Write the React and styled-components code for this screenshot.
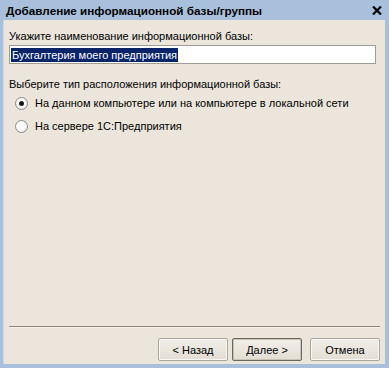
import React, { useState } from 'react';
import styled, { createGlobalStyle } from 'styled-components';

const Global = createGlobalStyle`
  html, body { margin: 0; padding: 0; }
  body { background: #ebe5db; }
`;

const Window = styled.div`
  width: 389px;
  height: 368px;
  box-sizing: border-box;
  display: flex;
  flex-direction: column;
  background: #a9c0dc;
  padding: 0 4px 4px 3px;
  font-family: "Liberation Sans", Arial, sans-serif;
  font-size: 11px;
  color: #000;
`;

const TitleBar = styled.div`
  height: 20px;
  display: flex;
  align-items: center;
  justify-content: space-between;
  padding: 0 3px 0 3px;
`;

const Title = styled.span`
  font-weight: bold;
  font-size: 11.7px;
`;

const CloseIcon = () => (
  <svg width="10" height="9" viewBox="0 0 10 9">
    <path d="M1 0.5 L9 8.5 M9 0.5 L1 8.5" stroke="#000" strokeWidth="2.2" />
  </svg>
);

const Body = styled.div`
  flex: 1;
  display: flex;
  flex-direction: column;
  background: #ebe5db;
  border-left: 1px solid #c8d6e8;
  padding: 9px 5px 0 5px;
`;

const Label = styled.div`
  margin-top: ${(p) => p.$mt || 0}px;
  line-height: 14px;
`;

const Input = styled.div`
  height: 19px;
  box-sizing: border-box;
  margin: 2px 4px 0 0;
  background: #fff;
  border: 1px solid #a09c94;
  padding: 2px 1px;
  display: flex;
  align-items: center;
`;

const Selected = styled.span`
  background: #0a246a;
  color: #fff;
  line-height: 14px;
  padding: 0 1px;
`;

const RadioList = styled.div`
  display: flex;
  flex-direction: column;
  gap: 10px;
  margin-top: 6px;
  padding-left: 6px;
`;

const RadioRow = styled.label`
  display: flex;
  align-items: center;
  gap: 7px;
  line-height: 13px;
  white-space: nowrap;
`;

const Circle = styled.span`
  width: 11px;
  height: 11px;
  border-radius: 50%;
  border: 1px solid #8a8a8a;
  background: radial-gradient(circle at 40% 35%, #ffffff 40%, #e4e2dc 100%);
  display: flex;
  align-items: center;
  justify-content: center;
  &::after {
    content: '';
    width: 5px;
    height: 5px;
    border-radius: 50%;
    background: ${(p) => (p.$checked ? '#1a1a1a' : 'transparent')};
  }
`;

const Spacer = styled.div`
  flex: 1;
`;

const Separator = styled.div`
  height: 0;
  border-top: 1px solid #8e8677;
  border-bottom: 1px solid #f6f3ee;
`;

const Buttons = styled.div`
  display: flex;
  justify-content: flex-end;
  gap: 4px;
  padding: 10px 0 3px 0;
`;

const Button = styled.button`
  width: 70px;
  height: 23px;
  box-sizing: border-box;
  font-family: "Liberation Sans", Arial, sans-serif;
  font-size: 11px;
  color: #000;
  background: linear-gradient(#f2efe9, #e3ddd3);
  border: 1px solid ${(p) => (p.$default ? '#6c675d' : '#aba69c')};
  box-shadow: ${(p) => (p.$default ? 'inset 0 0 0 1px #c9c3b8' : 'inset 0 0 0 1px #faf8f4')};
  border-radius: 2px;
  margin-left: ${(p) => p.$ml || 0}px;
  padding: 0;
`;

export default function App() {
  const [choice, setChoice] = useState(0);
  const options = [
    'На данном компьютере или на компьютере в локальной сети',
    'На сервере 1С:Предприятия',
  ];
  return (
    <>
      <Global />
      <Window>
        <TitleBar>
          <Title>Добавление информационной базы/группы</Title>
          <CloseIcon />
        </TitleBar>
        <Body>
          <Label>Укажите наименование информационной базы:</Label>
          <Input>
            <Selected>Бухгалтерия моего предприятия</Selected>
          </Input>
          <Label $mt={13}>Выберите тип расположения информационной базы:</Label>
          <RadioList>
            {options.map((o, i) => (
              <RadioRow key={o} onClick={() => setChoice(i)}>
                <Circle $checked={choice === i} />
                {o}
              </RadioRow>
            ))}
          </RadioList>
          <Spacer />
          <Separator />
          <Buttons>
            <Button>&lt; Назад</Button>
            <Button $default>Далее &gt;</Button>
            <Button $ml={4}>Отмена</Button>
          </Buttons>
        </Body>
      </Window>
    </>
  );
}
